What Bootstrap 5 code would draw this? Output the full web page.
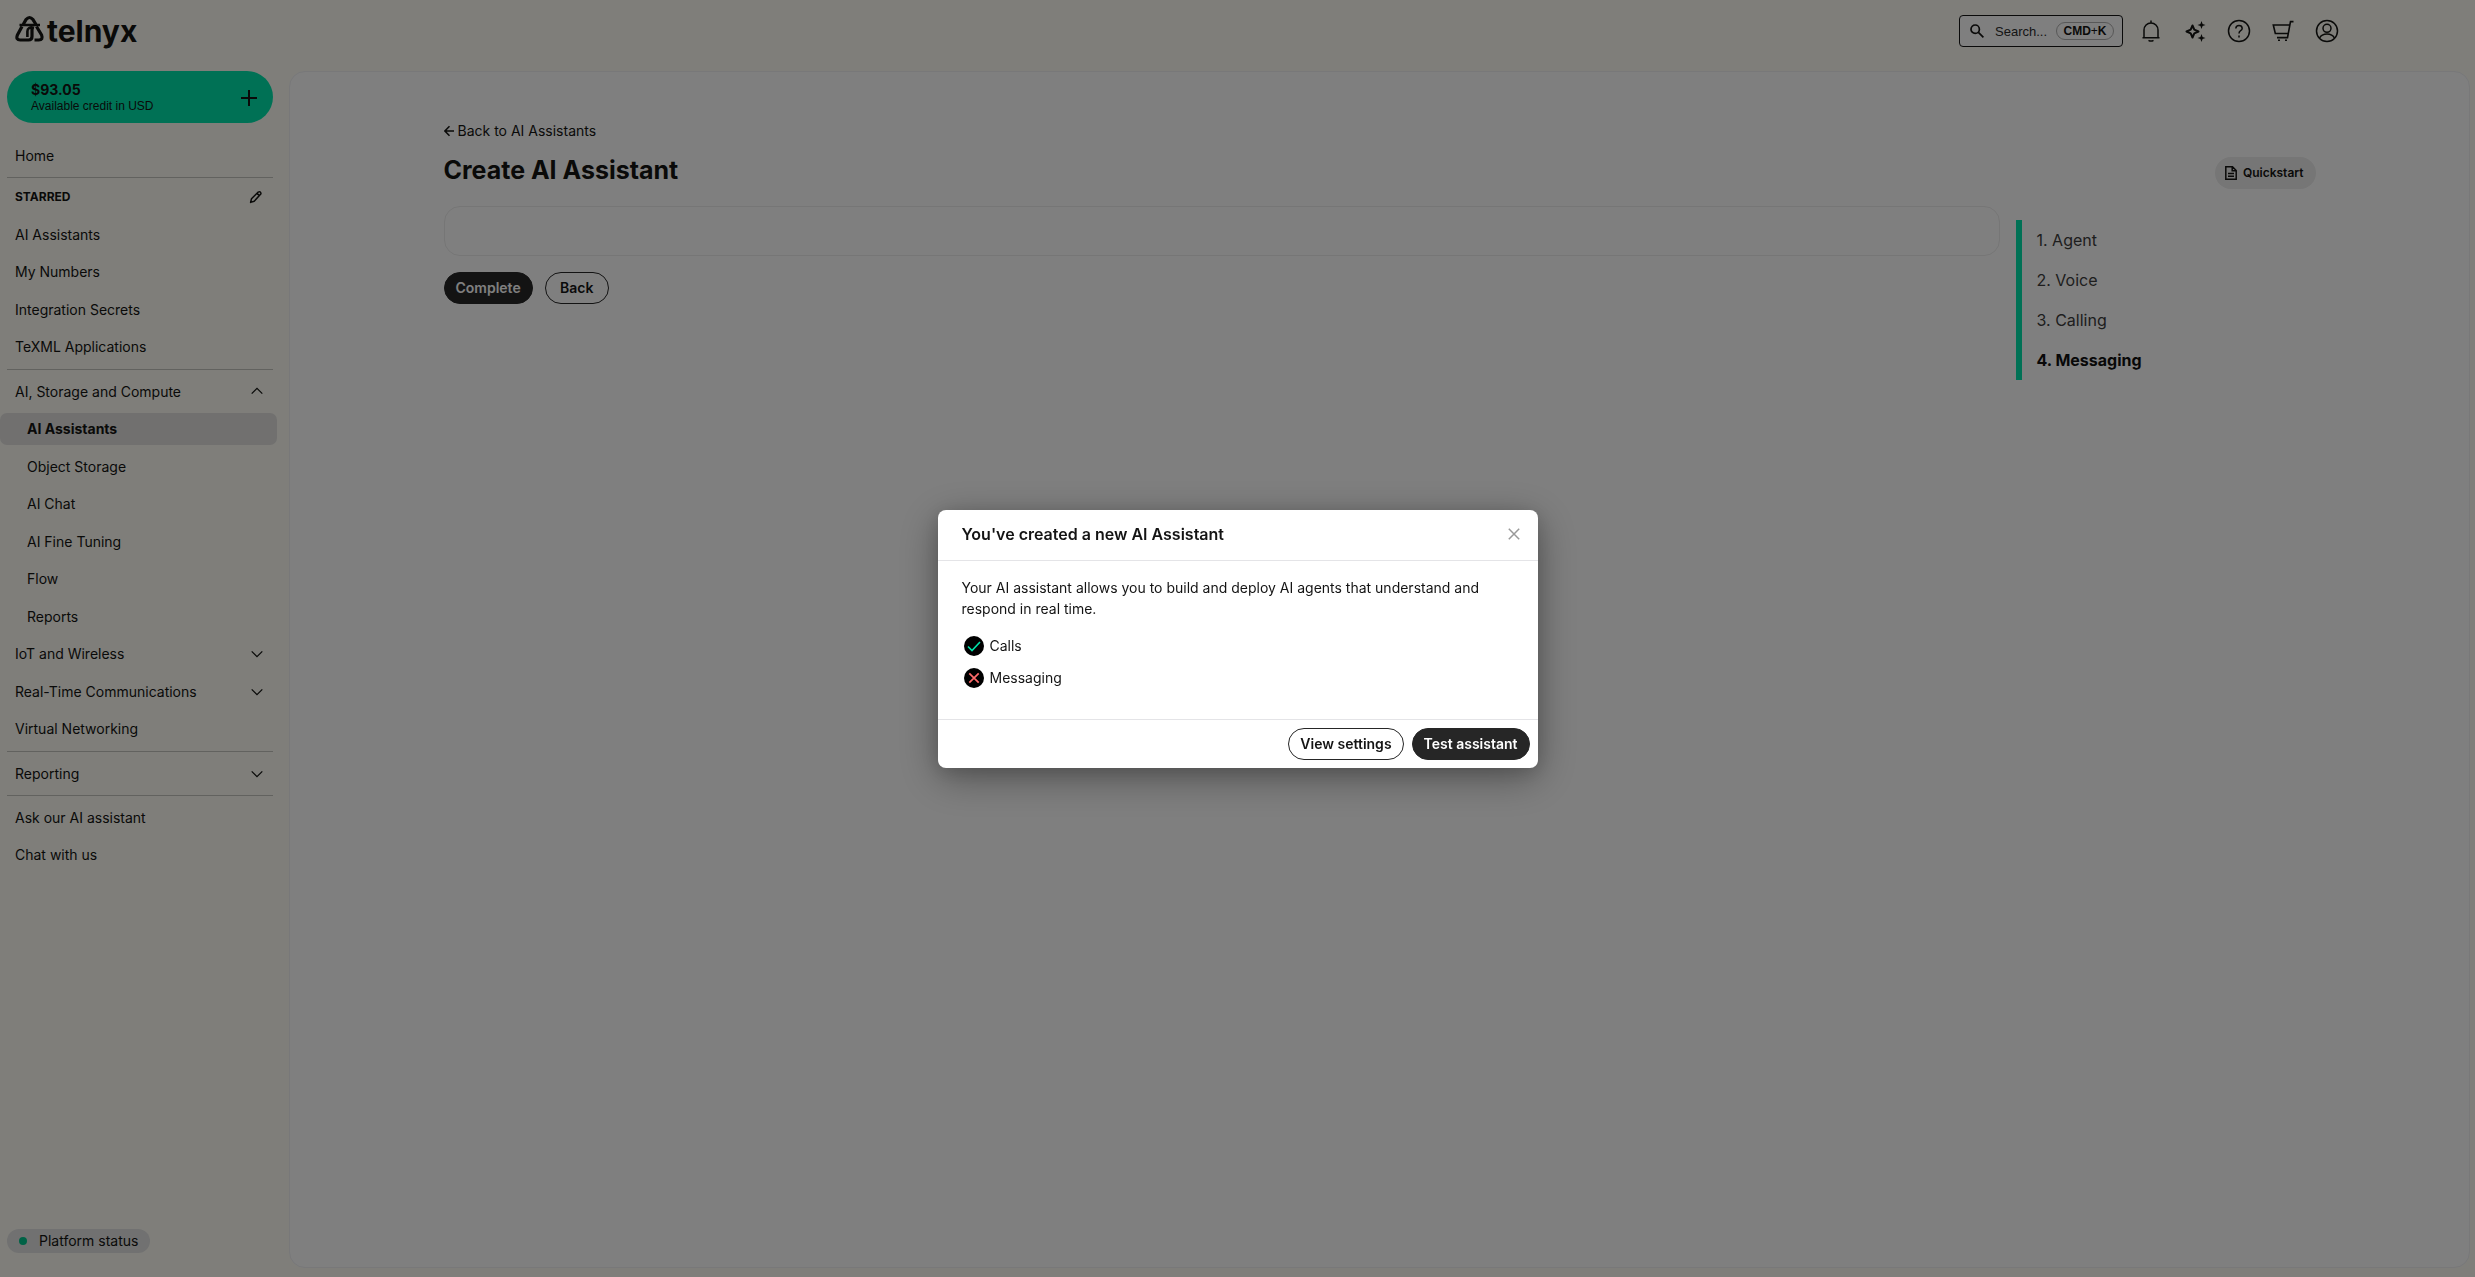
<!DOCTYPE html>
<html lang="en">
<head>
<meta charset="utf-8">
<meta name="viewport" content="width=device-width, initial-scale=1">
<title>Create AI Assistant</title>
<link href="https://cdn.jsdelivr.net/npm/bootstrap@5.3.0/dist/css/bootstrap.min.css" rel="stylesheet">
<style>
:root { --ink: #141412; --cream: #fefdf5; --mint: #00e3aa; }
body { font-family: Inter, "Liberation Sans", sans-serif; font-size: 14px; line-height: 22px; color: var(--ink); background: var(--cream); }
svg { display: block; flex-shrink: 0; fill: none; stroke: currentColor; }
a { color: inherit; text-decoration: none; }
.side { width: 289px; flex-shrink: 0; }
.brand-row { height: 71px; padding: 15px 0 0 15px; gap: 2px; }
.brand-word { font-size: 30px; line-height: 32px; font-weight: 700; }
.credit { height: 52px; margin: 0 16px 17px 7px; padding: 1px 16px 0 24px; border: 0; border-radius: 26px; background: var(--mint); color: var(--ink); text-align: left; }
.credit-sum { font-size: 14px; line-height: 16px; font-weight: 700; }
.credit-note { font: 12px/16px "Liberation Sans", sans-serif; }
.side-list { gap: 5px; margin: 0; }
.side-list li:nth-child(even) { padding-bottom: 1px; }
.side-item { display: flex; align-items: center; justify-content: space-between; width: 277px; height: 32px; padding: 0 14px 0 15px; border: 0; border-radius: 7px; background: none; color: inherit; text-align: left; }
.side-item.sub { padding-left: 27px; }
.side-item.active { background: #e2e1df; font-weight: 700; }
.side-rule { height: 1px; margin: 5px 16px 6px 7px; background: #c4c4be; border: 0; opacity: 1; }
.side-rule.tight { margin-bottom: 3px; }
.side-item.starred { margin-bottom: 6px; font-size: 12px; font-weight: 700; }
.status-pill { height: 24px; margin: 0 0 24px 7px; padding: 0 12px; gap: 12px; border-radius: 12px; background: #e2e2e2; }
.status-dot { width: 8px; height: 8px; border-radius: 50%; background: #00c48c; }
.wide { width: 100%; max-width: 1920px; margin: 0 auto; }
.top-row { height: 71px; padding: 0 3px 9px 0; gap: 20px; }
.search-box { width: 164px; height: 32px; margin-right: -4px; padding: 0 8px 0 10px; border: 1px solid #141414; border-radius: 4px; background: #fff; }
.search-box input { width: 66px; border: 0; padding: 0 0 0 11px; background: none; font: 13px "Liberation Sans", sans-serif; color: var(--ink); outline: 0; }
.search-box input::placeholder { color: #2c2c2c; opacity: 1; }
.search-box .key-hint { width: 58px; height: 18px; border: 1px solid #b0b0b0; border-radius: 9px; font: 700 12px/16px "Liberation Sans", sans-serif; text-align: center; }
.key-hint span { font-weight: 400; }
.icon-btn { padding: 0; border: 0; background: none; color: var(--ink); }
.icon-btn.faint { color: #999; }
.panel { margin: 0 5px 9px 0; border: 1px solid #f0f0f3; border-radius: 16px; background: #fff; }
.page { padding: 48px 24px; }
.page-title { font-size: 25px; line-height: 38px; font-weight: 700; margin: 0; }
.quick { height: 32px; padding: 0 12px 0 10px; gap: 6px; border: 0; border-radius: 16px; background: #ececec; font-size: 12px; font-weight: 600; color: var(--ink); }
.page-body { margin-top: 17px; }
.blank-card { height: 50px; border: 1px solid #ececec; border-radius: 16px; }
.pill { min-width: 64px; height: 32px; padding: 0 11px; border: 1px solid #262626; border-radius: 16px; background: #fff; color: #141414; font-size: 14px; line-height: 20px; font-weight: 600; }
.pill-dark { background: #262626; color: #fff; }
.page-actions { margin-top: 16px; gap: 12px; }
.steps { width: 300px; flex-shrink: 0; margin: 14px 0 0 16px; border-left: 6px solid var(--mint); font-size: 16px; line-height: 40px; color: #3c3c3c; }
.steps li { padding-left: 15px; }
.steps .now { font-weight: 700; color: #111; }
.modal-backdrop.show { opacity: 1; background: rgba(0,0,0,.5); }
.done-dialog { max-width: 600px; }
.done-box { border: 0; border-radius: 8px; box-shadow: 0 10px 40px rgba(0,0,0,.35), 0 4px 20px rgba(0,0,0,.15); color: #141414; }
.done-head { height: 51px; padding: 0 18px 1px 24px; border-bottom: 1px solid #e4e4e7; }
.done-head h2 { font-size: 16px; line-height: 24px; font-weight: 600; margin: 0; }
.done-text { padding: 16px 24px 25px; line-height: 21px; }
.done-text p { margin: 0 0 11px; }
.done-text li { height: 32px; gap: 6px; padding-left: 2px; }
.done-foot { padding: 8px; gap: 8px; border-top: 1px solid #e4e4e7; }
</style>
<script src="https://cdn.jsdelivr.net/npm/bootstrap@5.3.0/dist/js/bootstrap.bundle.min.js"></script>
</head>
<body>
<div class="d-flex min-vh-100">
  <aside class="side d-flex flex-column">
    <a href="#" class="brand-row d-flex align-items-start" aria-label="telnyx home">
      <svg width="30" height="28" viewBox="0 0 30 28"><g stroke-width="3.2" stroke-linejoin="round">
        <path d="M8.2 9.500 11 4.600Q14.500 .400 18 4.600L21 9.500"/>
        <path d="M7 11.500 2.400 20Q.600 25 5.200 25H13.500Q17 25 17 21.500V12"/>
        <path d="M21.500 11.500 26.600 20Q28.400 25 23.800 25H19.500"/>
        <path d="M4.500 10H25M19 13Q12.400 11.500 12.400 16.500V22" stroke-width="2.600"/></g>
      </svg>
      <span class="brand-word">telnyx</span>
    </a>
    <button class="credit d-flex align-items-center justify-content-between" type="button">
      <span><span class="credit-sum d-block">$93.05</span><span class="credit-note d-block">Available credit in USD</span></span>
      <svg width="16" height="16" viewBox="0 0 16 16" stroke-width="2"><path d="M8 0v16M0 8h16"/></svg>
    </button>
    <nav aria-label="Main">
      <a class="side-item" href="#">Home</a>
      <hr class="side-rule tight">
      <div class="side-item starred">STARRED
        <button class="icon-btn" type="button" aria-label="Edit starred"><svg width="14" height="14" viewBox="0 0 14 14" stroke-width="1.5" stroke-linejoin="round"><path d="M1.6 12.4 2.5 8.8 9 2.2Q11.8.6 12 3.8L5.2 11.2ZM8 3.4l2.6 2.5"/></svg></button>
      </div>
      <ul class="side-list list-unstyled d-flex flex-column">
        <li><a class="side-item" href="#">AI Assistants</a></li>
        <li><a class="side-item" href="#">My Numbers</a></li>
        <li><a class="side-item" href="#">Integration Secrets</a></li>
        <li><a class="side-item" href="#">TeXML Applications</a></li>
      </ul>
      <hr class="side-rule">
      <ul class="side-list list-unstyled d-flex flex-column">
        <li><button class="side-item" type="button" aria-expanded="true">AI, Storage and Compute<svg width="12" height="12" viewBox="0 0 12 12" stroke-width="1.3"><path d="M.7 7.6 6 2.3l5.3 5.3"/></svg></button></li>
        <li><a class="side-item sub active" href="#">AI Assistants</a></li>
        <li><a class="side-item sub" href="#">Object Storage</a></li>
        <li><a class="side-item sub" href="#">AI Chat</a></li>
        <li><a class="side-item sub" href="#">AI Fine Tuning</a></li>
        <li><a class="side-item sub" href="#">Flow</a></li>
        <li><a class="side-item sub" href="#">Reports</a></li>
        <li><button class="side-item" type="button">IoT and Wireless<svg width="12" height="12" viewBox="0 0 12 12" stroke-width="1.3"><path d="M.7 3.4 6 8.7l5.3-5.3"/></svg></button></li>
        <li><button class="side-item" type="button">Real-Time Communications<svg width="12" height="12" viewBox="0 0 12 12" stroke-width="1.3"><path d="M.7 3.4 6 8.7l5.3-5.3"/></svg></button></li>
        <li><a class="side-item" href="#">Virtual Networking</a></li>
      </ul>
      <hr class="side-rule">
      <button class="side-item" type="button">Reporting<svg width="12" height="12" viewBox="0 0 12 12" stroke-width="1.3"><path d="M.7 3.4 6 8.7l5.3-5.3"/></svg></button>
      <hr class="side-rule">
      <ul class="side-list list-unstyled d-flex flex-column">
        <li><a class="side-item" href="#">Ask our AI assistant</a></li>
        <li><a class="side-item" href="#">Chat with us</a></li>
      </ul>
    </nav>
    <a href="#" class="status-pill d-flex align-items-center mt-auto align-self-start"><span class="status-dot"></span>Platform status</a>
  </aside>

  <div class="d-flex flex-column flex-grow-1">
    <header class="wide top-row d-flex align-items-center justify-content-end">
      <div class="search-box d-flex align-items-center">
        <svg width="14" height="14" viewBox="0 0 14 14" stroke-width="1.7"><circle cx="5.2" cy="5.2" r="4.2"/><path d="m8.4 8.4 5 5"/></svg>
        <input type="text" placeholder="Search..." aria-label="Search">
        <kbd class="key-hint p-0 bg-transparent text-reset ms-auto">CMD<span>+</span>K</kbd>
      </div>
      <button class="icon-btn" type="button" aria-label="Notifications"><svg width="24" height="24" viewBox="0 0 24 24" stroke-width="1.5"><path d="M3.5 18.7H20.5M5 18.7V11a7 7 0 0 1 14 0v7.700M12 1.500V4M9.500 21.300a3.200 1.600 0 0 0 5 0"/></svg></button>
      <button class="icon-btn" type="button" aria-label="What's new"><svg width="24" height="24" viewBox="0 0 24 24" stroke-width="2" stroke-linejoin="round"><path d="M9.500 6.500 11.300 10.700 15.500 12.500 11.300 14.300 9.500 18.500 7.700 14.300 3.500 12.500 7.700 10.700Z"/><path fill="currentColor" stroke="none" d="M18.500 2 19.600 4.900 22.500 6 19.600 7.100 18.500 10 17.400 7.100 14.500 6 17.400 4.900ZM18.500 15 19.600 17.900 22.500 19 19.600 20.100 18.500 23 17.400 20.100 14.500 19 17.400 17.900Z"/></svg></button>
      <button class="icon-btn" type="button" aria-label="Help"><svg width="24" height="24" viewBox="0 0 24 24" stroke-width="1.5"><circle cx="12" cy="12" r="10.500"/><path d="M8.800 9.500Q9 6.600 12 6.600T15.200 9.300Q15.200 10.700 13.600 11.600T12 14.600M12 16.400v2"/></svg></button>
      <button class="icon-btn" type="button" aria-label="Cart"><svg width="24" height="24" viewBox="0 0 24 24" stroke-width="1.600"><path d="M22.500 2.600H19.500L16.500 18.600H6M18.700 6H2.300L4.300 14.500H17"/><path d="M7 21.300h2M14 21.300h2"/></svg></button>
      <button class="icon-btn" type="button" aria-label="Account"><svg width="24" height="24" viewBox="0 0 24 24" stroke-width="1.500"><circle cx="12" cy="12" r="10.500"/><circle cx="12" cy="9.300" r="4"/><path d="M4.500 19.200C6 16 9 15 12 15s6 1 7.500 4.200"/></svg></button>
    </header>
    <main class="panel flex-grow-1">
      <div class="page wide">
        <a href="#" class="d-inline-flex align-items-center gap-1"><svg width="10" height="12" viewBox="0 0 10 12" stroke-width="1.500"><path d="M10 6H1M5.500 1.300.900 6l4.600 4.700"/></svg>Back to AI Assistants</a>
        <div class="d-flex align-items-end justify-content-between mt-2">
          <h1 class="page-title">Create AI Assistant</h1>
          <button class="quick d-flex align-items-center" type="button"><svg width="12" height="14" viewBox="0 0 12 14" stroke-width="1.500"><path d="M.8.800H7.500L11.200 4.500V13.200H.8ZM7.200.800V4.800H11.200M3 7.500h6M3 10.200h6"/></svg>Quickstart</button>
        </div>
        <div class="page-body d-flex">
          <div class="flex-grow-1">
            <div class="blank-card"></div>
            <div class="page-actions d-flex">
              <button class="pill pill-dark" type="button">Complete</button>
              <button class="pill" type="button">Back</button>
            </div>
          </div>
          <ol class="steps list-unstyled">
            <li>1. Agent</li><li>2. Voice</li><li>3. Calling</li><li class="now">4. Messaging</li>
          </ol>
        </div>
      </div>
    </main>
  </div>
</div>

<div class="modal-backdrop show"></div>
<div class="modal show d-block" tabindex="-1" role="dialog" aria-modal="true" aria-labelledby="doneTitle">
  <div class="modal-dialog modal-dialog-centered done-dialog">
    <div class="modal-content done-box">
      <div class="done-head d-flex align-items-center justify-content-between">
        <h2 id="doneTitle">You've created a new AI Assistant</h2>
        <button class="icon-btn faint" type="button" aria-label="Close"><svg width="12" height="12" viewBox="0 0 12 12" stroke-width="1.500"><path d="m.8.800 10.400 10.400M11.200.800.800 11.200"/></svg></button>
      </div>
      <div class="done-text">
        <p>Your AI assistant allows you to build and deploy AI agents that understand and respond in real time.</p>
        <ul class="list-unstyled m-0">
          <li class="d-flex align-items-center"><svg width="20" height="20" viewBox="0 0 20 20"><circle cx="10" cy="10" r="10" fill="#000" stroke="none"/><path d="m4 10.500 4 4L16 6" stroke="#00e3aa" stroke-width="1.600"/></svg>Calls</li>
          <li class="d-flex align-items-center"><svg width="20" height="20" viewBox="0 0 20 20"><circle cx="10" cy="10" r="10" fill="#000" stroke="none"/><path d="m5.300 5.300 9.400 9.400M14.700 5.300 5.300 14.700" stroke="#ff6b6b" stroke-width="1.700"/></svg>Messaging</li>
        </ul>
      </div>
      <div class="done-foot d-flex justify-content-end">
        <button class="pill" type="button">View settings</button>
        <button class="pill pill-dark" type="button">Test assistant</button>
      </div>
    </div>
  </div>
</div>
</body>
</html>
